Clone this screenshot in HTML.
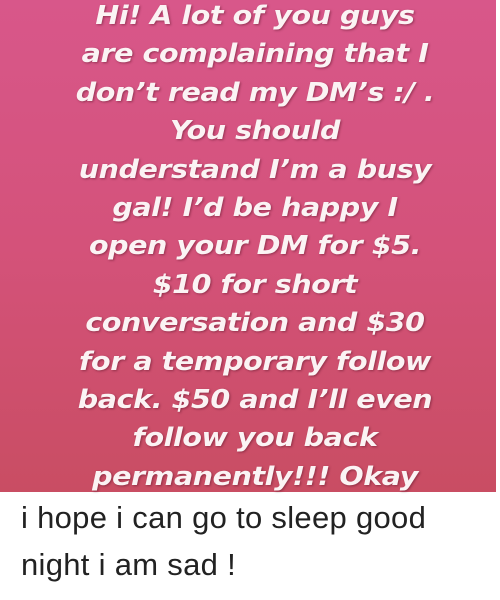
<!DOCTYPE html>
<html><head><style>
body{margin:0;width:500px;height:600px;background:#fff;overflow:hidden;position:relative;font-family:"Liberation Sans",sans-serif}
.pink{position:absolute;left:0;top:0;width:496px;height:492px;background:linear-gradient(180deg,#d8578a 0%,#d4527a 50%,#c94d63 100%)}
.t{position:absolute;left:0;width:510px;top:-3px;text-align:center;color:#fbf3f4;font-family:"DejaVu Sans",sans-serif;font-weight:bold;font-style:italic;font-size:25.5px;line-height:38.4px;text-shadow:1px 1px 2px rgba(90,20,40,.5);letter-spacing:-0.4px;transform:scaleX(1.12);transform-origin:255px 0}
.b{position:absolute;left:21px;top:494px;font-size:31px;line-height:47px;color:#222;font-weight:300;letter-spacing:0.3px}
</style></head><body>
<div class="pink"></div>
<div class="t">Hi! A lot of you guys<br>are complaining that I<br>don’t read my DM’s :/ .<br>You should<br>understand I’m a busy<br>gal! I’d be happy I<br>open your DM for $5.<br>$10 for short<br>conversation and $30<br>for a temporary follow<br>back. $50 and I’ll even<br>follow you back<br>permanently!!! Okay</div>
<div class="b">i hope i can go to sleep good<br>night i am sad !</div>
</body></html>
